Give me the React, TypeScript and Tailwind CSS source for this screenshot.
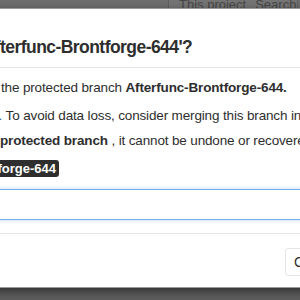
export default function App() {
  return (
    <div className="relative h-[300px] w-[300px] overflow-hidden bg-[#4c4c4c] font-['Liberation_Sans',Arial,sans-serif]">
      {/* Page behind the backdrop */}
      <div className="flex h-10 items-start bg-[#6e6e6e]">
        <div className="ml-[168px] -mt-[2px] flex h-8 w-[130px] items-start gap-[9px] border-x border-[#5e5e5e] bg-[#747474] pl-[10px] text-[13px] leading-[13px] text-[#474747]">
          <span>This project</span>
          <span>Search</span>
        </div>
      </div>
      <div className="h-[260px] bg-gradient-to-b from-[#404040] to-[#5c5c5c]" />

      {/* Delete protected branch modal */}
      <div className="absolute left-[-300px] top-[8px] w-[680px] rounded-[3px] border border-black/40 bg-white text-[#2e2e2e] shadow-[0_3px_9px_rgba(0,0,0,0.5)]">
        <div className="border-b border-[#e5e5e5] px-4 pb-2 pt-[26px]">
          <h3 className="flex whitespace-nowrap text-[17.5px] font-bold leading-6 tracking-[-0.55px]">
            <span className="w-[283px] shrink-0 text-right">Delete protected branch 'Af</span>
            <span>terfunc-Brontforge-644'?</span>
          </h3>
        </div>

        <div className="px-4 pb-[13px] pt-[10px] text-[13.5px] leading-5 tracking-[-0.15px]">
          <p className="flex whitespace-nowrap">
            <span className="w-[284px] shrink-0 text-right">You’re about to permanently delete{"\u00a0"}</span>
            <span>
              the protected branch <strong>Afterfunc-Brontforge-644.</strong>
            </span>
          </p>
          <p className="mt-2 flex whitespace-nowrap">
            <span className="w-[285px] shrink-0 text-right">
              This branch hasn’t been merged into <span className="text-[#1b69b6]">master.</span>
            </span>
            <span>{"\u00a0"}To avoid data loss, consider merging this branch into master before deleting it.</span>
          </p>
          <p className="mt-[5px] flex whitespace-nowrap">
            <span className="w-[283px] shrink-0 text-right">
              Once you confirm and press <strong>Delete{"\u00a0"}</strong>
            </span>
            <span>
              <strong>protected branch</strong> , it cannot be undone or recovered.
            </span>
          </p>
          <p className="mt-[9px] flex h-[17px] w-[342px] items-center justify-end whitespace-nowrap">
            Please type the following to confirm:
            <code className="ml-1 h-[17px] rounded-[3px] bg-[#2e2e2e] px-[3px] font-['Liberation_Sans',Arial,sans-serif] text-[13px] font-bold leading-[17px] tracking-normal text-white">
              Afterfunc-Brontforge-644
            </code>
          </p>
          <input
            type="text"
            className="mt-[12px] block h-[31px] w-full rounded-[3px] border border-[#73afea] px-2 text-[14px] shadow-[0_0_4px_rgba(115,175,234,0.5)] outline-none"
          />
        </div>

        <div className="flex gap-2 border-t border-[#e5e5e5] px-4 pb-[11px] pt-[14px]">
          <button className="ml-[568px] h-7 rounded-[3px] border border-[#e5e5e5] bg-white px-2 text-[14px] text-[#2e2e2e]">
            Cancel
          </button>
          <button className="h-7 rounded-[3px] border border-[#d22852] bg-[#db3b21] px-2 text-[14px] text-white">
            Delete protected branch
          </button>
        </div>
      </div>
    </div>
  );
}
